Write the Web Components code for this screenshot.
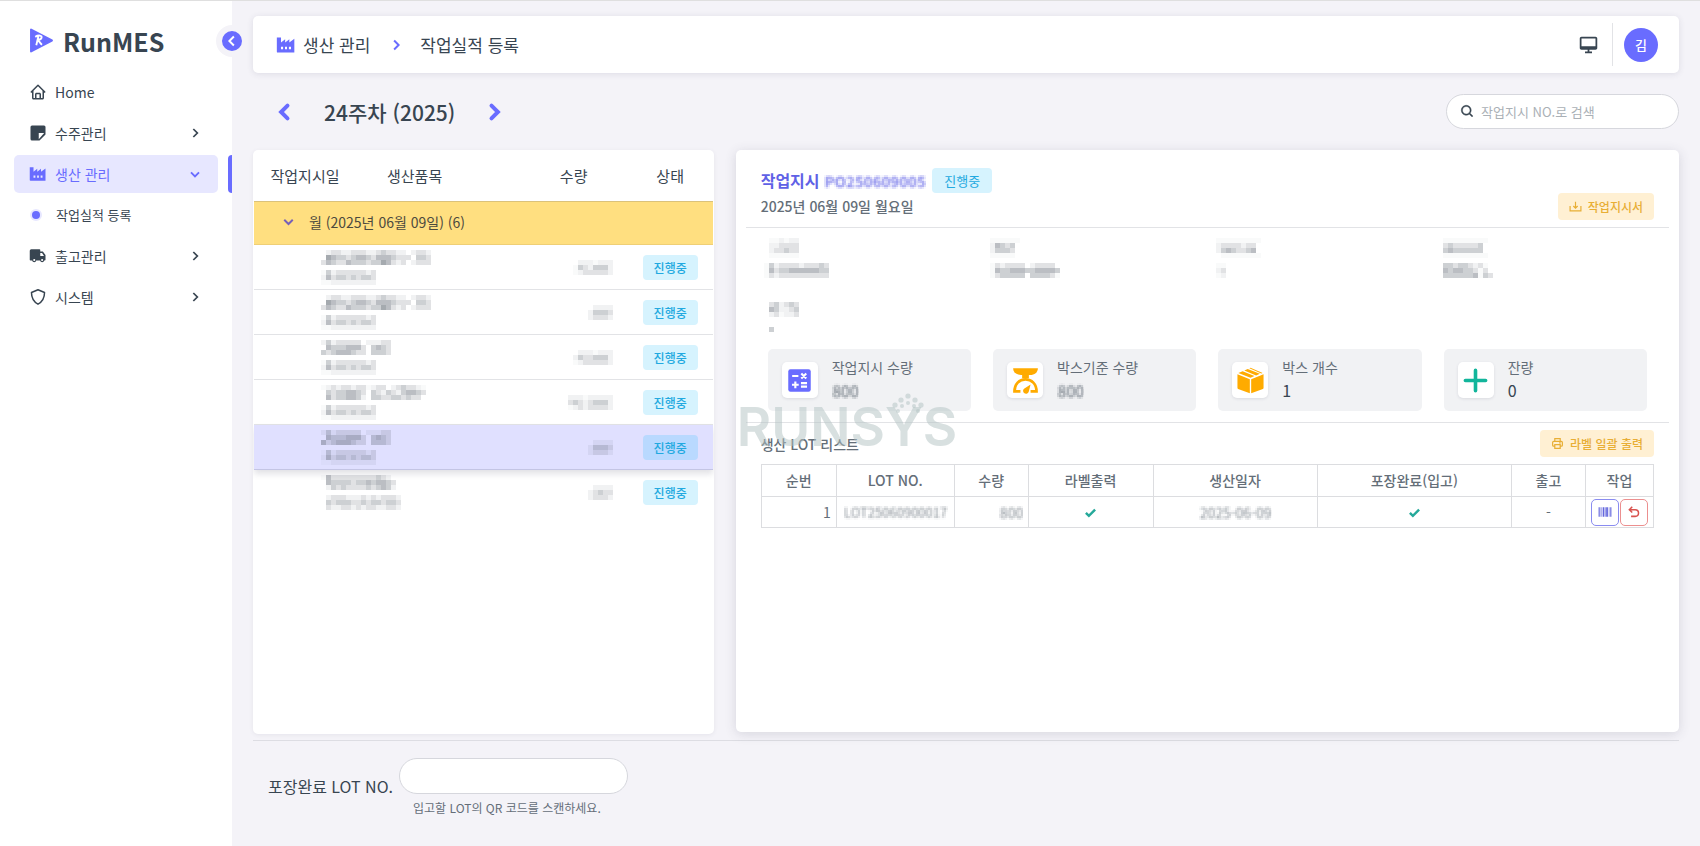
<!DOCTYPE html>
<html lang="ko">
<head>
<meta charset="utf-8">
<meta name="viewport" content="width=device-width, initial-scale=1">
<title>RunMES - 작업실적 등록</title>
<style>
  :root {
    --primary: #696cff;
    --ink: #384551;
    --muted: #646e78;
    --line: #e2e3e6;
    --page: #f4f3f8;
    --soft: #e7e7ff;
    --info: #22a9e0;
    --info-soft: #d6f3fe;
    --warn: #e8ae35;
    --warn-soft: #fff0d3;
  }
  * { box-sizing: border-box; }
  body {
    margin: 0;
    background: var(--page);
    color: var(--ink);
    font: 14px/20px "Noto Sans CJK KR", "Noto Sans", sans-serif;
  }
</style>
</head>
<body>
<mes-app></mes-app>

<script>
const ICONS = {
  left: '<path d="M14.5 6 8.5 12l6 6" fill="none" stroke="currentColor" stroke-width="2.6"/>',
  right: '<path d="M9.5 6l6 6-6 6" fill="none" stroke="currentColor" stroke-width="2.6"/>',
  prev: '<path d="M15 6.500 9.500 12l5.500 5.500" fill="none" stroke="currentColor" stroke-width="3.400" stroke-linecap="round"/>',
  next: '<path d="M9 6.500l5.500 5.500L9 17.500" fill="none" stroke="currentColor" stroke-width="3.400" stroke-linecap="round"/>',
  down: '<path d="M6 9.500l6 6 6-6" fill="none" stroke="currentColor" stroke-width="2.800"/>',
  home: '<path fill="currentColor" d="M3 13h1v7c0 1.103.897 2 2 2h12c1.103 0 2-.897 2-2v-7h1a1 1 0 0 0 .707-1.707l-9-9a.999.999 0 0 0-1.414 0l-9 9A1 1 0 0 0 3 13zm7 7v-5h4v5h-4zm2-15.586 6 6V20h-2v-5c0-1.103-.897-2-2-2h-4c-1.103 0-2 .897-2 2v5H6v-9.586l6-6z"/>',
  note: '<path fill="currentColor" fill-rule="evenodd" d="M4 2h16a2 2 0 0 1 2 2v10l-8 8H4a2 2 0 0 1-2-2V4a2 2 0 0 1 2-2zm9 10v8.200L20.200 12z"/>',
  factory: '<path fill="currentColor" fill-rule="evenodd" d="M1 3h5v6l5-4v4l5-4v4l6-4.500V21H2a1 1 0 0 1-1-1zm5 11v3h2.500v-3zm4.800 0v3h2.400v-3zm4.700 0v3H18v-3z"/>',
  truck: '<path fill="currentColor" fill-rule="evenodd" d="M3 3h11a1 1 0 0 1 1 1v2h3.500l3.500 4.500V17a1 1 0 0 1-1 1h-.7a2.800 2.800 0 0 1-5.500 0H9.700a2.800 2.800 0 0 1-5.500 0H2a1 1 0 0 1-1-1V5a2 2 0 0 1 2-2zm12 5v4h5l-2.600-4zM7 16a1.400 1.400 0 1 0 0 2.800A1.400 1.400 0 0 0 7 16zm10.500 0a1.400 1.400 0 1 0 0 2.800 1.400 1.400 0 0 0 0-2.800z"/>',
  shield: '<path d="M12 2.300 3.300 6c0 7 2.700 12.300 8.700 15.500C18 18.300 20.700 13 20.700 6z" fill="none" stroke="currentColor" stroke-width="2" stroke-linejoin="round"/>',
  search: '<path fill="currentColor" d="M10 18a7.952 7.952 0 0 0 4.897-1.688l4.396 4.396 1.414-1.414-4.396-4.396A7.952 7.952 0 0 0 18 10c0-4.411-3.589-8-8-8s-8 3.589-8 8 3.589 8 8 8zm0-14c3.309 0 6 2.691 6 6s-2.691 6-6 6-6-2.691-6-6 2.691-6 6-6z" stroke="currentColor" stroke-width=".6"/>',
  desktop: '<path fill="currentColor" d="M20 3H4c-1.103 0-2 .897-2 2v11c0 1.103.897 2 2 2h7v2H8v2h8v-2h-3v-2h7c1.103 0 2-.897 2-2V5c0-1.103-.897-2-2-2zM4 14V5h16l.002 9H4z"/>',
  tray: '<path d="M2 11v9h20v-9M12 3v12M8 11l4 4 4-4" fill="none" stroke="currentColor" stroke-width="2.200"/>',
  printer: '<path d="M7 8V3h10v5M7 17H5a2 2 0 0 1-2-2v-5a2 2 0 0 1 2-2h14a2 2 0 0 1 2 2v5a2 2 0 0 1-2 2h-2M7 14h10v7H7zM15 11h3" fill="none" stroke="currentColor" stroke-width="2.200"/>',
  calc: '<rect x="2" y="2" width="20" height="20" rx="2" fill="#696cff"/><path d="M5.500 8h5.500M13.600 5.800l4.400 4.400M18 5.800l-4.400 4.400M5.300 15.800h6M8.300 12.800v6M13.300 14.300h5.400M13.300 17.400h5.400" fill="none" stroke="#fff" stroke-width="1.900"/>',
  scale: '<path d="M1 1h22c0 3.600-3 6-7 6H8C4 7 1 4.600 1 1z" fill="#ffab00"/><path d="M9 6h6v4H9z" fill="#ffab00"/><path d="M7.500 21.700H2.200C2.200 15 6.500 11 12 11s9.800 4 9.800 10.700h-5.300" fill="none" stroke="#ffab00" stroke-width="2.400"/><path d="M16.500 15.500 15 21.500a2.600 2.600 0 1 1-4-2.500z" fill="#ffab00"/>',
  box: '<path fill="#ffab00" d="M11.400 10.800v12.500L1 19.500a1 1 0 0 1-.6-1V6.500zM12.600 10.800v12.500L23 19.500a1 1 0 0 0 .6-1V6.500zM1.200 5.300 5 3.700l10.500 4.400-3.500 1.500zM6.500 3.100 9.500 1.800l10.800 4.300-3.300 1.400zM11 1.200l1-.5 10.800 4.600-1.200.4z"/>',
  plus: '<path d="M12 3v18M3 12h18" stroke="#12b59b" stroke-width="3.200" stroke-linecap="round"/>',
  check: '<path d="M3.500 12.500 9 18 20.500 6.500" fill="none" stroke="#25a99a" stroke-width="4.500"/>',
  barcode: '<path fill="currentColor" d="M1 4h2v16H1zM4.500 4h1.500v16H4.500zM8 4h3v16H8zM12 4h1v16h-1zM14 4h3v16h-3zM18.500 4h1v16h-1zM21 4h2v16h-2z"/>',
  undo: '<path d="M9 3 4 8l5 5M4.500 8H14a5.500 5.500 0 0 1 0 11.500H7" fill="none" stroke="currentColor" stroke-width="2.600"/>',
  logo: '<path d="M2 1.500v21L22 12z" fill="#696cff" stroke="#696cff" stroke-width="2" stroke-linejoin="round"/><path d="M7 16.500 9 8M6 8.500c3-2 7-1.500 6 1-.6 1.500-2.500 2-4 2 1.500.5 2.500 3 4.500 4.500" fill="none" stroke="#fff" stroke-width="1.800"/>'
};

function define(name, markup, setup) {
  const template = document.createElement('template');
  template.innerHTML = '<style>*{box-sizing:border-box}:host{display:block}:host([hidden]){display:none}</style>' + markup;
  customElements.define(name, class extends HTMLElement {
    constructor() {
      super();
      this.attachShadow({ mode: 'open' }).append(template.content.cloneNode(true));
    }
    connectedCallback() { if (setup) setup(this, this.shadowRoot); }
  });
}

define('ui-icon', `
  <style>
    :host { display: inline-block; flex: none; width: 18px; height: 18px; }
    svg { display: block; width: 100%; height: 100%; }
  </style>
  <svg viewBox="0 0 24 24" aria-hidden="true"></svg>`,
  (el, root) => { root.querySelector('svg').innerHTML = ICONS[el.getAttribute('name')]; });

/* Masked value: rows are separated by "/", each digit is the darkness of one 5px cell. */
define('masked-blocks', `
  <style>
    :host { color: #4b5560; }
    svg { display: block; }
  </style>
  <svg aria-hidden="true" shape-rendering="crispEdges"></svg>`,
  (el, root) => {
    const rows = el.getAttribute('cells').split('/');
    const svg = root.querySelector('svg');
    svg.setAttribute('width', Math.max(...rows.map(r => r.length)) * 5);
    svg.setAttribute('height', rows.length * 5);
    svg.innerHTML = rows.map((row, y) => [...row].map((c, x) => +c
      ? `<rect x="${x * 5}" y="${y * 5}" width="5" height="5" fill="currentColor" opacity="${[0, .03, .08, .17, .28, .38, .5][c]}"/>` : '').join('')).join('');
  });

/* Masked but still readable value: one pixel of every 2x2 block is sampled and spread over the block. */
define('masked-text', `
  <style>
    :host { display: inline-block; }
    span { display: inline-block; filter: url(#pixels); opacity: .8; }
    svg { position: absolute; }
  </style>
  <svg width="0" height="0" aria-hidden="true"><filter id="pixels" x="0" y="0" width="1" height="1" color-interpolation-filters="sRGB">
    <feGaussianBlur in="SourceGraphic" stdDeviation=".9" result="soft"/>
    <feFlood x="0" y="0" width="1" height="1"/>
    <feComposite x="0" y="0" width="2" height="2"/>
    <feTile result="grid"/>
    <feComposite in="soft" in2="grid" operator="in" result="dots"/>
    <feOffset in="dots" dx="1" result="right"/>
    <feMerge result="pair"><feMergeNode in="dots"/><feMergeNode in="right"/></feMerge>
    <feOffset in="pair" dy="1" result="below"/>
    <feMerge><feMergeNode in="pair"/><feMergeNode in="below"/></feMerge>
  </filter></svg><span><slot></slot></span>`);

define('status-badge', `
  <style>
    :host { display: inline-block; padding: 3px 11px; border-radius: 4px; background: var(--info-soft);
      color: var(--info); font-size: 12px; line-height: 19px; font-weight: 500; white-space: nowrap; }
    :host([large]) { padding: 3px 12px; font-size: 13px; font-weight: 400; }
    :host([active]) { background: #b9d9ff; }
  </style><slot></slot>`);

define('soft-button', `
  <style>
    button { display: flex; align-items: center; gap: 6px; height: 27px; padding: 0 11px; border: 0; border-radius: 4px;
      background: var(--warn-soft); color: var(--warn); font: 500 12px/20px "Noto Sans CJK KR", sans-serif; white-space: nowrap; }
    ui-icon { width: 13px; height: 13px; }
  </style>
  <button type="button"><ui-icon></ui-icon><slot></slot></button>`,
  (el, root) => {
    const icon = document.createElement('ui-icon');
    icon.setAttribute('name', el.getAttribute('icon'));
    root.querySelector('ui-icon').replaceWith(icon);
  });

define('nav-item', `
  <style>
    :host { position: relative; padding: 0 14px; }
    a { display: flex; align-items: center; gap: 8px; height: 38px; padding: 0 15px; border-radius: 5px;
      color: var(--ink); text-decoration: none; }
    .label { flex: 1; }
    :host([sub]) .label { font-size: 13px; }
    .arrow { width: 16px; height: 16px; }
    .dot { width: 8px; height: 8px; margin: 0 8px 0 3px; border-radius: 50%; background: var(--primary); box-shadow: 0 0 0 2px var(--soft); }
    :host([active]) a { background: var(--soft); color: var(--primary); }
    :host([active])::after { content: ""; position: absolute; top: 0; right: 0; width: 4px; height: 38px;
      border-radius: 4px 0 0 4px; background: var(--primary); }
  </style>
  <a href="#"><span class="label"><slot></slot></span></a>`,
  (el, root) => {
    const a = root.querySelector('a');
    const icon = el.getAttribute('icon'), arrow = el.getAttribute('arrow');
    a.insertAdjacentHTML('afterbegin', icon ? `<ui-icon name="${icon}"></ui-icon>` : '<span class="dot"></span>');
    if (arrow) a.insertAdjacentHTML('beforeend', `<ui-icon class="arrow" name="${arrow}"></ui-icon>`);
  });

define('app-sidebar', `
  <style>
    :host { position: relative; flex: none; width: 232px; background: #fff; }
    .brand { display: flex; align-items: center; gap: 9px; height: 71px; padding: 8px 29px 0;
      font-size: 25px; line-height: 36px; font-weight: 700; }
    .brand ui-icon { width: 25px; height: 25px; }
    nav { display: grid; gap: 3px; padding-top: 1px; }
    button { position: absolute; top: 24px; right: -16px; width: 32px; height: 32px; padding: 0;
      border: 6px solid var(--page); border-radius: 50%; background: var(--primary); color: #fff; }
    button ui-icon { display: block; width: 18px; height: 18px; margin: 1px; }
  </style>
  <div class="brand"><ui-icon name="logo"></ui-icon><span>RunMES</span></div>
  <nav aria-label="메뉴">
    <nav-item icon="home">Home</nav-item>
    <nav-item icon="note" arrow="right">수주관리</nav-item>
    <nav-item icon="factory" arrow="down" active>생산 관리</nav-item>
    <nav-item sub>작업실적 등록</nav-item>
    <nav-item icon="truck" arrow="right">출고관리</nav-item>
    <nav-item icon="shield" arrow="right">시스템</nav-item>
  </nav>
  <button type="button" aria-label="메뉴 접기"><ui-icon name="left"></ui-icon></button>`);

define('app-topbar', `
  <style>
    :host { display: flex; align-items: center; height: 57px; padding: 0 21px; border-radius: 5px;
      background: #fff; box-shadow: 0 1px 6px rgba(60, 60, 90, .12); font-size: 17px; line-height: 26px; }
    .crumbs { flex: 1; display: flex; align-items: center; }
    .crumbs ui-icon { color: var(--primary); }
    .crumbs .area { width: 20px; height: 20px; margin: 0 7px 0 2px; }
    .crumbs .sep { margin: 0 15px 0 17px; }
    .screen { width: 21px; height: 21px; margin-right: 13px; }
    .user { display: flex; align-items: center; height: 43px; padding-left: 11px; border-left: 1px solid var(--line); }
    .avatar { width: 34px; height: 34px; border: 0; border-radius: 50%; background: var(--primary); color: #fff;
      font: 500 13px/30px "Noto Sans CJK KR", sans-serif; padding: 0; }
  </style>
  <div class="crumbs"><ui-icon class="area" name="factory"></ui-icon><span>생산 관리</span>
    <ui-icon class="sep" name="right"></ui-icon><span>작업실적 등록</span></div>
  <ui-icon class="screen" name="desktop"></ui-icon>
  <div class="user"><button class="avatar" type="button">김</button></div>`);

define('week-bar', `
  <style>
    :host { display: flex; align-items: center; justify-content: space-between; padding: 21px 0; }
    .week { display: flex; align-items: center; gap: 26px; padding-left: 17px; }
    h1 { margin: 0; font-size: 21px; line-height: 34px; font-weight: 500; }
    .week button { display: block; padding: 0; border: 0; background: none; color: var(--primary); }
    .week ui-icon { display: block; width: 28px; height: 28px; }
    .search { display: flex; align-items: center; gap: 6px; width: 233px; height: 35px; padding: 0 13px;
      border: 1px solid #d6d7dd; border-radius: 18px; background: #fff; }
    .search ui-icon { width: 15px; height: 15px; }
    input { flex: 1; min-width: 0; border: 0; outline: 0; padding: 0; background: none; color: var(--ink);
      font: 13px/20px "Noto Sans CJK KR", sans-serif; }
    input::placeholder { color: #aab0b6; }
  </style>
  <div class="week">
    <button type="button" aria-label="이전 주"><ui-icon name="prev"></ui-icon></button>
    <h1>24주차 (2025)</h1>
    <button type="button" aria-label="다음 주"><ui-icon name="next"></ui-icon></button>
  </div>
  <label class="search"><ui-icon name="search"></ui-icon><input type="text" placeholder="작업지시 NO.로 검색" aria-label="작업지시 검색"></label>`);

define('order-list', `
  <style>
    :host { overflow: hidden; padding: 0 1px; border-radius: 5px; background: #fff; box-shadow: 0 1px 4px rgba(60, 60, 90, .08); }
    table { width: 100%; border-collapse: separate; border-spacing: 0; table-layout: fixed; }
    th { height: 51px; padding: 0; font-size: 15px; line-height: 20px; font-weight: 400; text-align: center; }
    th.item { text-align: left; padding-left: 31px; }
    td { height: 45px; padding: 0; border-bottom: 1px solid var(--line); vertical-align: middle; }
    .group td { height: 44px; padding-bottom: 3px; background: #ffdf80; border-top: 1px solid #dbc27a; border-bottom-color: #efcf76; color: #4c4a3e; }
    .group button { display: flex; align-items: center; gap: 12px; padding: 0 0 0 26px; border: 0; background: none;
      color: inherit; font: 14px/20px "Noto Sans CJK KR", sans-serif; }
    .group ui-icon { width: 17px; height: 17px; color: #7660b8; }
    td.name { padding-left: 67px; }
    td.qty { padding-right: 15px; }
    .qty masked-blocks { display: flex; justify-content: flex-end; }
    .state { text-align: center; }
    .selected td { background: #e0e0ff; border-bottom-color: #c4c5e4; }
    .selected { box-shadow: 0 4px 6px rgba(60, 60, 90, .15); }
    tr:last-child td { border-bottom: 0; }
  </style>
  <table>
    <colgroup><col style="width:102px"><col><col style="width:108px"><col style="width:85px"></colgroup>
    <thead><tr><th>작업지시일</th><th class="item">생산품목</th><th>수량</th><th>상태</th></tr></thead>
    <tbody>
      <tr class="group"><td colspan="4"><button type="button"><ui-icon name="down"></ui-icon><span>월 (2025년 06월 09일) (6)</span></button></td></tr>
    </tbody>
  </table>`,
  (el, root) => {
    const second = '14233333323/25344343443/11222222222';
    const long = '0233223332234332202332/0654434554355543330443/3543354443446532302333';
    const rows = [
      [long, second, '02221222/14324442/12333332'],
      [long, second, '002222/024443/023332'],
      ['24233333022233/05444555304543/43455543304443', second, '02221222/24334442/12333332'],
      ['123233233123302343321/0434455430432432455430/053445542044334434330', second, '0222122222/0343234442/0123233332'],
      ['24233333022233/05444555304543/53455543304443', second, '002222/024443/023332', 'selected'],
      ['153333333334320/054444344545543/024343333434542', '02333222323233320/04344433434434430/03223323233223320', '002222/023433/023332']
    ];
    root.querySelector('tbody').insertAdjacentHTML('beforeend', rows.map(([a, b, q, c]) => `
      <tr class="${c || ''}"><td class="name" colspan="2"><masked-blocks cells="${a}/0/${b}"></masked-blocks></td>
      <td class="qty"><masked-blocks cells="${q}"></masked-blocks></td>
      <td class="state"><status-badge ${c ? 'active' : ''}>진행중</status-badge></td></tr>`).join(''));
  });

define('stat-card', `
  <style>
    :host { display: flex; align-items: center; gap: 14px; height: 62px; padding: 0 14px; border-radius: 5px; background: #f1f2f4; }
    .tile { display: grid; place-items: center; flex: none; width: 36px; height: 36px; border-radius: 5px; background: #fff;
      box-shadow: 0 1px 3px rgba(60, 60, 90, .12); }
    .tile ui-icon { width: 27px; height: 27px; }
    .label { color: var(--muted); line-height: 20px; }
    .value { font-size: 16px; line-height: 26px; }
  </style>
  <div class="tile"></div>
  <div><div class="label"><slot name="label"></slot></div><div class="value"><slot></slot></div></div>`,
  (el, root) => { root.querySelector('.tile').innerHTML = `<ui-icon name="${el.getAttribute('icon')}"></ui-icon>`; });

define('lot-table', `
  <style>
    table { width: 100%; border-collapse: collapse; table-layout: fixed; color: var(--muted); }
    th, td { border: 1px solid #dcdde0; padding: 0 5px; text-align: center; line-height: 20px; }
    th { height: 32px; padding-bottom: 2px; font-weight: 500; }
    td { height: 31px; font-size: 14px; }
    td.num { text-align: right; }
    td.lot { font-size: 13px; }
    td > ui-icon { display: block; width: 13px; height: 13px; margin: 0 auto; }
    .actions { display: flex; justify-content: center; gap: 1px; }
    button { display: grid; place-items: center; width: 28px; height: 27px; padding: 0; border: 1px solid #8a8cf0; border-radius: 5px;
      background: #fff; color: #6467dd; }
    button.undo { border-color: #ec8f8f; color: #d9534f; }
    button ui-icon { width: 16px; height: 14px; }
  </style>
  <table>
    <colgroup><col style="width:75px"><col style="width:118px"><col style="width:74px"><col style="width:14%"><col style="width:164px"><col><col style="width:74px"><col style="width:68px"></colgroup>
    <thead><tr><th>순번</th><th>LOT NO.</th><th>수량</th><th>라벨출력</th><th>생산일자</th><th>포장완료(입고)</th><th>출고</th><th>작업</th></tr></thead>
    <tbody><tr>
      <td class="num">1</td><td class="lot"><masked-text>LOT25060900017</masked-text></td><td class="num"><masked-text>800</masked-text></td>
      <td><ui-icon name="check"></ui-icon></td><td><masked-text>2025-06-09</masked-text></td><td><ui-icon name="check"></ui-icon></td>
      <td>-</td>
      <td><div class="actions"><button type="button" aria-label="라벨 출력"><ui-icon name="barcode"></ui-icon></button><button type="button" class="undo" aria-label="취소"><ui-icon name="undo"></ui-icon></button></div></td>
    </tr></tbody>
  </table>`);

define('run-watermark', `
  <style>
    :host { position: absolute; left: 1px; top: 229px; color: rgba(178, 194, 194, .5); pointer-events: none; }
    span { display: block; font: 600 53px/60px Inter, "Liberation Sans", sans-serif; padding-top: 18px; }
    svg { position: absolute; left: 155px; top: 14px; width: 32px; height: 20px; fill: currentColor; }
  </style>
  <svg viewBox="0 0 32 20" aria-hidden="true"><circle cx="16" cy="3" r="2.600"/><circle cx="9" cy="7" r="2.600"/><circle cx="23" cy="7" r="2.600"/><circle cx="3" cy="12" r="2.600"/><circle cx="29" cy="12" r="2.600"/><circle cx="16" cy="10" r="2"/><circle cx="10" cy="13" r="2"/><circle cx="22" cy="13" r="2"/><circle cx="6" cy="18" r="2"/><circle cx="26" cy="18" r="2"/></svg>
  <span>RUNSYS</span>`);

define('order-detail', `
  <style>
    :host { padding: 18px 10px 0; border-radius: 5px; background: #fff; box-shadow: 0 2px 12px rgba(60, 60, 90, .16); }
    header { display: flex; justify-content: space-between; align-items: flex-end; padding: 0 15px 7px; border-bottom: 1px solid var(--line); }
    .title { display: flex; align-items: center; gap: 7px; }
    h2 { margin: 0; font-size: 16px; line-height: 24px; font-weight: 700; color: #5f61e6; }
    h2 masked-text { font-size: 15px; }
    .date { margin: 3px 0 4px; line-height: 20px; font-weight: 500; color: var(--muted); }
    .info { display: grid; grid-template-columns: repeat(4, 1fr); align-content: start; gap: 24px 22px; padding: 10px 22px 0 18px; height: 121px; }
    .memo { grid-column: 1 / -1; }
    .wide { border-bottom: 1px solid var(--line); }
    .stats { display: grid; grid-template-columns: repeat(4, 1fr); gap: 22px; padding: 0 22px 11px; }
    .lots { padding: 7px 15px 0; }
    .lots .bar { display: flex; justify-content: space-between; align-items: center; margin-bottom: 7px; }
    h3 { margin: 0; font-size: 14px; line-height: 20px; font-weight: 500; color: var(--muted); }
  </style>
  <header>
    <div>
      <div class="title"><h2>작업지시 <masked-text>PO250609005</masked-text></h2><status-badge large>진행중</status-badge></div>
      <div class="date">2025년 06월 09일 월요일</div>
    </div>
    <soft-button icon="tray">작업지시서</soft-button>
  </header>
  <div class="info">
    <masked-blocks cells="0112122/0223333/0233433/0111111/0/1423333233343/1534455555544/1323333333333"></masked-blocks>
    <masked-blocks cells="111111/254340/244430/111110/0/13233330233330/15445554455554/13444440444431"></masked-blocks>
    <masked-blocks cells="111111111/233332330/245433450/011111111/0/11/23/12"></masked-blocks>
    <masked-blocks cells="111111111/343333340/454444440/111111111/0/44344323100/54554431300/44444451430"></masked-blocks>
    <masked-blocks class="memo" cells="03423430/05422340/02312230/0/0/040"></masked-blocks>
  </div>
  <div class="wide">
    <div class="stats">
      <stat-card icon="calc"><span slot="label">작업지시 수량</span><masked-text>800</masked-text></stat-card>
      <stat-card icon="scale"><span slot="label">박스기준 수량</span><masked-text>800</masked-text></stat-card>
      <stat-card icon="box"><span slot="label">박스 개수</span>1</stat-card>
      <stat-card icon="plus"><span slot="label">잔량</span>0</stat-card>
    </div>
  </div>
  <div class="lots">
    <div class="bar"><h3>생산 LOT 리스트</h3><soft-button icon="printer">라벨 일괄 출력</soft-button></div>
    <lot-table></lot-table>
  </div>`);

define('packing-form', `
  <style>
    :host { border-top: 1px solid #dddde3; padding: 17px 15px 0; height: 106px; }
    form { display: flex; align-items: flex-start; gap: 6px; }
    label { padding-top: 16px; font-size: 16px; line-height: 24px; }
    .field { display: grid; gap: 4px; }
    input { width: 229px; height: 36px; padding: 0 14px; border: 1px solid #d6d7dd; border-radius: 18px; background: #fff;
      font: 14px/20px "Noto Sans CJK KR", sans-serif; color: var(--ink); }
    small { padding-left: 14px; font-size: 12px; line-height: 20px; color: var(--muted); }
  </style>
  <form>
    <label for="lot">포장완료 LOT NO.</label>
    <div class="field"><input id="lot" type="text"><small>입고할 LOT의 QR 코드를 스캔하세요.</small></div>
  </form>`);

define('mes-app', `
  <style>
    :host { display: flex; min-height: 100vh; border-top: 1px solid #dfdfdf; }
    main { flex: 1; min-width: 0; display: flex; flex-direction: column; padding: 15px 21px 0; }
    .work { flex: 1; display: grid; grid-template-columns: 461fr 944fr; gap: 22px; padding-bottom: 6px; }
    .pane { position: relative; display: grid; padding-bottom: 2px; }
  </style>
  <app-sidebar></app-sidebar>
  <main>
    <app-topbar></app-topbar>
    <week-bar></week-bar>
    <div class="work"><order-list></order-list><div class="pane"><order-detail></order-detail><run-watermark></run-watermark></div></div>
    <packing-form></packing-form>
  </main>`);
</script>
</body>
</html>
